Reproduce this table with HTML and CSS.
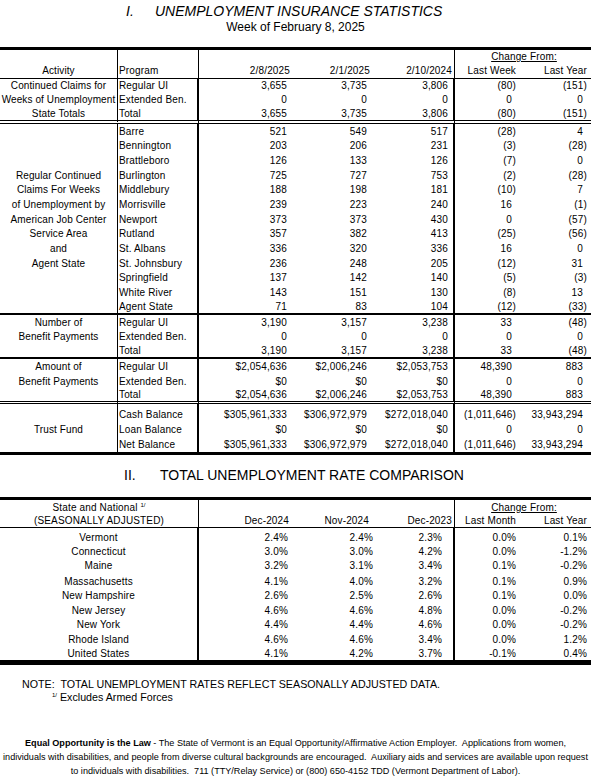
FILE: index.html
```html
<!DOCTYPE html>
<html lang="en">
<head>
<meta charset="utf-8">
<title>Unemployment Insurance Statistics</title>
<link rel="stylesheet" href="styles.css">
</head>
<body>
<div class="page">
  <h1 class="title"><span class="num">I.</span>UNEMPLOYMENT INSURANCE STATISTICS</h1>
  <div class="subtitle">Week of February 8, 2025</div>

  <table class="t1">
    <colgroup>
      <col class="w-a"><col class="w-b"><col class="w-c"><col class="w-d"><col class="w-e"><col class="w-f"><col class="w-g">
    </colgroup>
    <thead>
      <tr class="h14">
        <th class="a"></th><th class="b"></th><th></th><th></th><th class="e"></th>
        <th colspan="2" class="chg"><u>Change From:</u></th>
      </tr>
      <tr class="h15 hl">
        <th class="a">Activity</th><th class="b">Program</th>
        <th class="r">2/8/2025</th><th class="r">2/1/2025</th><th class="r e">2/10/2024</th>
        <th class="rc">Last Week</th><th class="rc">Last Year</th>
      </tr>
    </thead>
    <tbody>
      <tr class="h14"><td class="a">Continued Claims for</td><td class="b">Regular UI</td><td class="n">3,655</td><td class="n">3,735</td><td class="n e">3,806</td><td class="c">(80)</td><td class="c">(151)</td></tr>
      <tr class="h14"><td class="a">Weeks of Unemployment</td><td class="b">Extended Ben.</td><td class="n">0</td><td class="n">0</td><td class="n e">0</td><td class="c q">0</td><td class="c q">0</td></tr>
      <tr class="h17 dbl"><td class="a">State Totals</td><td class="b">Total</td><td class="n">3,655</td><td class="n">3,735</td><td class="n e">3,806</td><td class="c">(80)</td><td class="c">(151)</td></tr>

      <tr class="h15"><td class="a"></td><td class="b">Barre</td><td class="n">521</td><td class="n">549</td><td class="n e">517</td><td class="c">(28)</td><td class="c q">4</td></tr>
      <tr class="h14"><td class="a"></td><td class="b">Bennington</td><td class="n">203</td><td class="n">206</td><td class="n e">231</td><td class="c">(3)</td><td class="c">(28)</td></tr>
      <tr class="h15"><td class="a"></td><td class="b">Brattleboro</td><td class="n">126</td><td class="n">133</td><td class="n e">126</td><td class="c">(7)</td><td class="c q">0</td></tr>
      <tr class="h15"><td class="a">Regular Continued</td><td class="b">Burlington</td><td class="n">725</td><td class="n">727</td><td class="n e">753</td><td class="c">(2)</td><td class="c">(28)</td></tr>
      <tr class="h14"><td class="a">Claims For Weeks</td><td class="b">Middlebury</td><td class="n">188</td><td class="n">198</td><td class="n e">181</td><td class="c">(10)</td><td class="c q">7</td></tr>
      <tr class="h15"><td class="a">of Unemployment by</td><td class="b">Morrisville</td><td class="n">239</td><td class="n">223</td><td class="n e">240</td><td class="c q">16</td><td class="c">(1)</td></tr>
      <tr class="h15"><td class="a">American Job Center</td><td class="b">Newport</td><td class="n">373</td><td class="n">373</td><td class="n e">430</td><td class="c q">0</td><td class="c">(57)</td></tr>
      <tr class="h14"><td class="a">Service Area</td><td class="b">Rutland</td><td class="n">357</td><td class="n">382</td><td class="n e">413</td><td class="c">(25)</td><td class="c">(56)</td></tr>
      <tr class="h15"><td class="a">and</td><td class="b">St. Albans</td><td class="n">336</td><td class="n">320</td><td class="n e">336</td><td class="c q">16</td><td class="c q">0</td></tr>
      <tr class="h15"><td class="a">Agent State</td><td class="b">St. Johnsbury</td><td class="n">236</td><td class="n">248</td><td class="n e">205</td><td class="c">(12)</td><td class="c q">31</td></tr>
      <tr class="h14"><td class="a"></td><td class="b">Springfield</td><td class="n">137</td><td class="n">142</td><td class="n e">140</td><td class="c">(5)</td><td class="c">(3)</td></tr>
      <tr class="h15"><td class="a"></td><td class="b">White River</td><td class="n">143</td><td class="n">151</td><td class="n e">130</td><td class="c">(8)</td><td class="c q">13</td></tr>
      <tr class="h15 sep"><td class="a"></td><td class="b">Agent State</td><td class="n">71</td><td class="n">83</td><td class="n e">104</td><td class="c">(12)</td><td class="c">(33)</td></tr>

      <tr class="h15"><td class="a">Number of</td><td class="b">Regular UI</td><td class="n">3,190</td><td class="n">3,157</td><td class="n e">3,238</td><td class="c q">33</td><td class="c">(48)</td></tr>
      <tr class="h14"><td class="a">Benefit Payments</td><td class="b">Extended Ben.</td><td class="n">0</td><td class="n">0</td><td class="n e">0</td><td class="c q">0</td><td class="c q">0</td></tr>
      <tr class="h15 sep"><td class="a"></td><td class="b">Total</td><td class="n">3,190</td><td class="n">3,157</td><td class="n e">3,238</td><td class="c q">33</td><td class="c">(48)</td></tr>

      <tr class="h15"><td class="a">Amount of</td><td class="b">Regular UI</td><td class="n">$2,054,636</td><td class="n">$2,006,246</td><td class="n e">$2,053,753</td><td class="c q">48,390</td><td class="c q">883</td></tr>
      <tr class="h15"><td class="a">Benefit Payments</td><td class="b">Extended Ben.</td><td class="n">$0</td><td class="n">$0</td><td class="n e">$0</td><td class="c q">0</td><td class="c q">0</td></tr>
      <tr class="h15 dbl3"><td class="a"></td><td class="b">Total</td><td class="n">$2,054,636</td><td class="n">$2,006,246</td><td class="n e">$2,053,753</td><td class="c q">48,390</td><td class="c q">883</td></tr>

      <tr class="h18 padt"><td class="a"></td><td class="b">Cash Balance</td><td class="n">$305,961,333</td><td class="n">$306,972,979</td><td class="n e">$272,018,040</td><td class="c">(1,011,646)</td><td class="c q">33,943,294</td></tr>
      <tr class="h15"><td class="a">Trust Fund</td><td class="b">Loan Balance</td><td class="n">$0</td><td class="n">$0</td><td class="n e">$0</td><td class="c q">0</td><td class="c q">0</td></tr>
      <tr class="h15"><td class="a"></td><td class="b">Net Balance</td><td class="n">$305,961,333</td><td class="n">$306,972,979</td><td class="n e">$272,018,040</td><td class="c">(1,011,646)</td><td class="c q">33,943,294</td></tr>
    </tbody>
  </table>

  <h2 class="title2"><span class="num">II.</span>TOTAL UNEMPLOYMENT RATE COMPARISON</h2>

  <table class="t2">
    <colgroup>
      <col class="w-s"><col class="w-c"><col class="w-d2"><col class="w-e2"><col class="w-f"><col class="w-g">
    </colgroup>
    <thead>
      <tr class="h15">
        <th class="s">State and National <sup class="fn">1/</sup></th><th></th><th></th><th class="e"></th>
        <th colspan="2" class="chg"><u>Change From:</u></th>
      </tr>
      <tr class="h13 hl">
        <th class="s">(SEASONALLY ADJUSTED)</th>
        <th class="r2c">Dec-2024</th><th class="r2d">Nov-2024</th><th class="r2e e">Dec-2023</th>
        <th class="rc">Last Month</th><th class="rc">Last Year</th>
      </tr>
    </thead>
    <tbody>
      <tr class="h17 padt"><td class="s">Vermont</td><td class="vc">2.4%</td><td class="vd">2.4%</td><td class="ve e">2.3%</td><td class="vf">0.0%</td><td class="vg">0.1%</td></tr>
      <tr class="h13"><td class="s">Connecticut</td><td class="vc">3.0%</td><td class="vd">3.0%</td><td class="ve e">4.2%</td><td class="vf">0.0%</td><td class="vg">-1.2%</td></tr>
      <tr class="h16"><td class="s">Maine</td><td class="vc">3.2%</td><td class="vd">3.1%</td><td class="ve e">3.4%</td><td class="vf">0.1%</td><td class="vg">-0.2%</td></tr>
      <tr class="h15"><td class="s">Massachusetts</td><td class="vc">4.1%</td><td class="vd">4.0%</td><td class="ve e">3.2%</td><td class="vf">0.1%</td><td class="vg">0.9%</td></tr>
      <tr class="h14"><td class="s">New Hampshire</td><td class="vc">2.6%</td><td class="vd">2.5%</td><td class="ve e">2.6%</td><td class="vf">0.1%</td><td class="vg">0.0%</td></tr>
      <tr class="h15"><td class="s">New Jersey</td><td class="vc">4.6%</td><td class="vd">4.6%</td><td class="ve e">4.8%</td><td class="vf">0.0%</td><td class="vg">-0.2%</td></tr>
      <tr class="h14"><td class="s">New York</td><td class="vc">4.4%</td><td class="vd">4.4%</td><td class="ve e">4.6%</td><td class="vf">0.0%</td><td class="vg">-0.2%</td></tr>
      <tr class="h15"><td class="s">Rhode Island</td><td class="vc">4.6%</td><td class="vd">4.6%</td><td class="ve e">3.4%</td><td class="vf">0.0%</td><td class="vg">1.2%</td></tr>
      <tr class="h13"><td class="s">United States</td><td class="vc">4.1%</td><td class="vd">4.2%</td><td class="ve e">3.7%</td><td class="vf">-0.1%</td><td class="vg">0.4%</td></tr>
    </tbody>
  </table>

  <div class="note">NOTE:&nbsp; TOTAL UNEMPLOYMENT RATES REFLECT SEASONALLY ADJUSTED DATA.</div>
  <div class="footnote"><sup class="fn">1/</sup> Excludes Armed Forces</div>

  <p class="eo"><b>Equal Opportunity is the Law</b> - The State of Vermont is an Equal Opportunity/Affirmative Action Employer.&nbsp; Applications from women,<br>individuals with disabilities, and people from diverse cultural backgrounds are encouraged.&nbsp; Auxiliary aids and services are available upon request<br>to individuals with disabilities.&nbsp; 711 (TTY/Relay Service) or (800) 650-4152 TDD (Vermont Department of Labor).</p>
</div>
</body>
</html>
```

FILE: styles.css
```css
html, body {
  margin: 0;
  padding: 0;
  background: #fff;
}

body {
  color: #000;
  font-family: "Liberation Sans", Arial, sans-serif;
}

.page {
  width: 591px;
  padding-top: 3px;
}

.title {
  margin: 0;
  padding-left: 126px;
  font-size: 14px;
  line-height: 16px;
  font-weight: normal;
  font-style: italic;
  white-space: nowrap;
}

.title .num {
  display: inline-block;
  width: 29px;
}

.subtitle {
  margin-top: 1px;
  font-size: 12px;
  line-height: 14px;
  text-align: center;
}

.title2 {
  margin: 12px 0 0;
  padding-left: 124px;
  font-size: 14px;
  line-height: 16px;
  font-weight: normal;
  white-space: nowrap;
}

.title2 .num {
  display: inline-block;
  width: 36px;
}

table {
  border-collapse: separate;
  border-spacing: 0;
  table-layout: fixed;
  width: 591px;
  font-size: 10px;
  letter-spacing: 0.15px;
}

th, td {
  padding: 0;
  font-weight: normal;
  line-height: 12px;
  white-space: nowrap;
  vertical-align: middle;
  overflow: hidden;
}

.t1 {
  margin-top: 13px;
  border-top: 3px solid #000;
  border-bottom: 3px solid #000;
}

.t2 {
  margin-top: 14px;
  border-top: 3px solid #000;
  border-bottom: 5px solid #000;
}

.w-a { width: 118px; }
.w-b { width: 81px; }
.w-c { width: 93px; }
.w-d { width: 80px; }
.w-e { width: 83px; }
.w-f { width: 65px; }
.w-g { width: 71px; }
.w-s { width: 199px; }
.w-d2 { width: 85px; }
.w-e2 { width: 78px; }

.h13 { height: 13px; }
.h14 { height: 14px; }
.h15 { height: 15px; }
.h16 { height: 16px; }
.h17 { height: 17px; }
.h18 { height: 18px; }

.hl th { border-bottom: 1px solid #000; }
.sep td { border-bottom: 2px solid #000; }
.dbl td { border-bottom: 4px double #000; }
.dbl3 td { border-bottom: 3px double #000; }
.padt td { padding-top: 3px; }

/* column A: activity labels */
.a {
  text-align: center;
  border-right: 1px solid #000;
  letter-spacing: 0.1px;
}

/* column B: program */
.b {
  text-align: left;
  padding-left: 1px;
}
th.b { border-right: 1px solid #000; }
td.b { border-right: 2px solid #000; }

th.e { border-right: 1px solid #000; }
td.e { border-right: 2px solid #000; }

.r { text-align: right; padding-right: 2px; }
.rc { text-align: right; padding-right: 4px; }
.chg { text-align: center; padding-left: 2px; }

.n { text-align: right; padding-right: 5px; }
.c { text-align: right; padding-right: 4px; }
.c.q { padding-right: 8px; }

/* table 2 */
.s { text-align: center; }
th.s { border-right: 1px solid #000; }
td.s { border-right: 2px solid #000; }

.r2c { text-align: right; padding-right: 3px; }
.r2d { text-align: right; padding-right: 8px; }
.r2e { text-align: right; padding-right: 2px; }

.vc { text-align: right; padding-right: 4px; }
.vd { text-align: right; padding-right: 4px; }
.ve { text-align: right; padding-right: 11px; }
.vf { text-align: right; padding-right: 4px; }
.vg { text-align: right; padding-right: 4px; }

.fn {
  font-size: 6px;
  line-height: 0;
  vertical-align: 4px;
  letter-spacing: 0;
}

.note {
  margin-top: 13px;
  padding-left: 22px;
  font-size: 10.7px;
  line-height: 13px;
  white-space: nowrap;
}

.footnote {
  padding-left: 52px;
  font-size: 10.7px;
  line-height: 13px;
  white-space: nowrap;
}

.eo {
  margin: 32px 0 0;
  font-size: 9.1px;
  line-height: 14px;
  text-align: center;
  white-space: nowrap;
}
```
